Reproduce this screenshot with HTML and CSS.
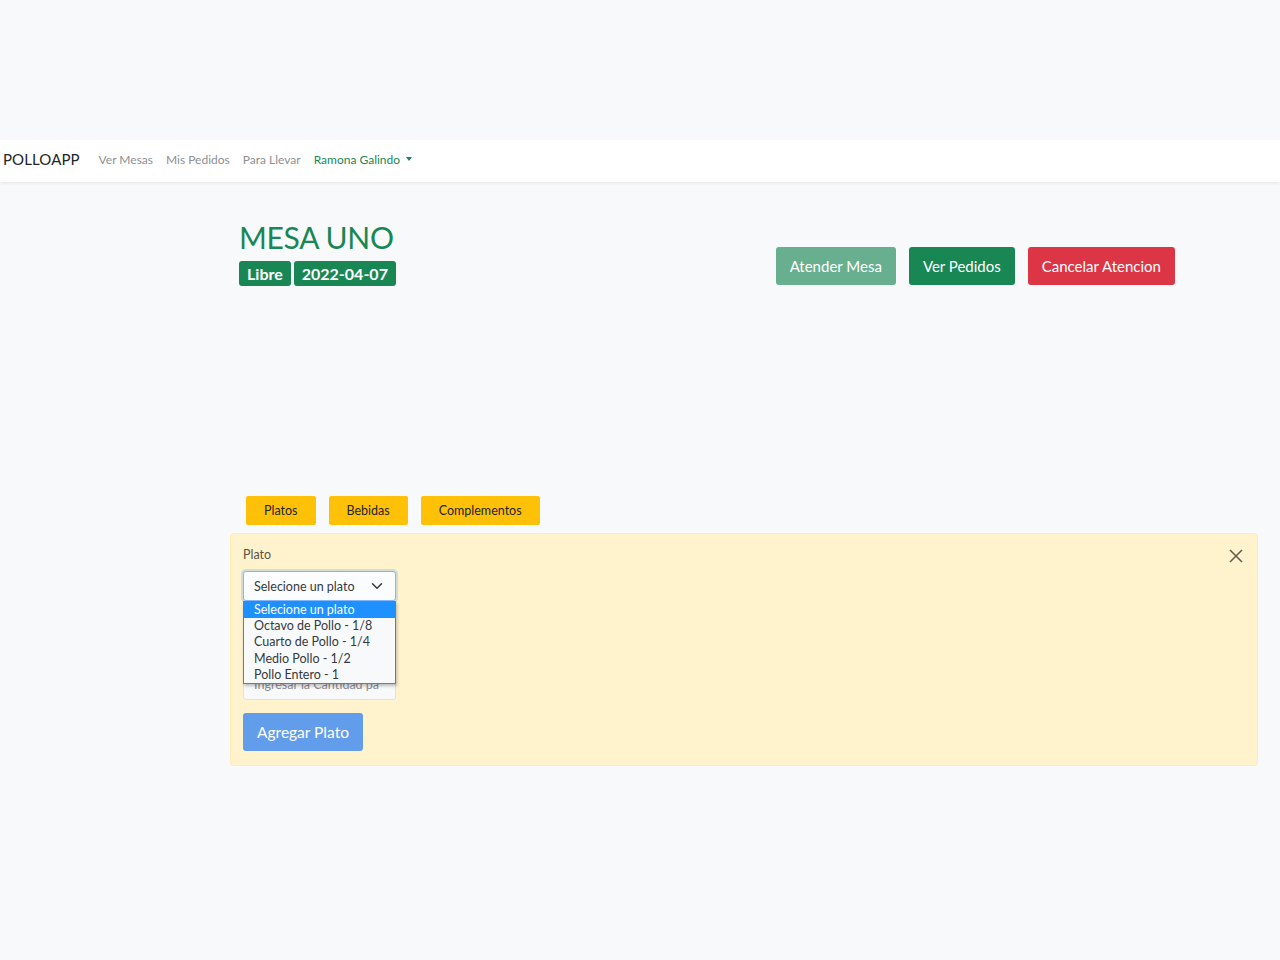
FILE: index.html
```html
<!DOCTYPE html>
<html lang="es">
<head>
<meta charset="utf-8">
<title>PolloApp - Mesa Uno</title>
<link rel="stylesheet" href="styles.css">
</head>
<body>
<div class="top-space"></div>
<nav class="navbar">
  <a class="brand">POLLOAPP</a>
  <ul class="nav-links">
    <li><a>Ver Mesas</a></li>
    <li><a>Mis Pedidos</a></li>
    <li><a>Para Llevar</a></li>
    <li><a class="user">Ramona Galindo <span class="caret"></span></a></li>
  </ul>
</nav>
<main>
  <section class="mesa-header">
    <div class="mesa-info">
      <h1 class="mesa-title">MESA UNO</h1>
      <div class="badges">
        <span class="badge">Libre</span>
        <span class="badge">2022-04-07</span>
      </div>
    </div>
    <div class="actions">
      <button class="btn btn-success disabled">Atender Mesa</button>
      <button class="btn btn-success">Ver Pedidos</button>
      <button class="btn btn-danger">Cancelar Atencion</button>
    </div>
  </section>

  <div class="tabs">
    <button class="tab">Platos</button>
    <button class="tab">Bebidas</button>
    <button class="tab">Complementos</button>
  </div>

  <section class="alert">
    <button class="close" aria-label="Cerrar">
      <svg width="14" height="14" viewBox="0 0 14 14"><path d="M1 1L13 13M13 1L1 13" stroke="#5f5a4f" stroke-width="1.5" fill="none"/></svg>
    </button>
    <label class="label">Plato</label>
    <div class="select-wrap">
      <div class="select">
        <span>Selecione un plato</span>
        <svg width="12" height="12" viewBox="0 0 16 16"><path d="M2 5l6 6 6-6" stroke="#343a40" stroke-width="2" fill="none" stroke-linecap="round" stroke-linejoin="round"/></svg>
      </div>
      <ul class="dropdown">
        <li class="active">Selecione un plato</li>
        <li>Octavo de Pollo - 1/8</li>
        <li>Cuarto de Pollo - 1/4</li>
        <li>Medio Pollo - 1/2</li>
        <li>Pollo Entero - 1</li>
      </ul>
    </div>
    <div class="input">Ingresar la Cantidad pa</div>
    <button class="btn btn-primary disabled">Agregar Plato</button>
  </section>
</main>
</body>
</html>
```
FILE: styles.css
```css
* { box-sizing: border-box; }
html, body { margin: 0; padding: 0; }
body {
  background: #f8f9fa;
  font-family: Lato, "Noto Sans", sans-serif;
  color: #212529;
  min-height: 960px;
}
.top-space { height: 140px; }
.navbar {
  height: 42px;
  background: #fff;
  display: flex;
  align-items: center;
  padding-left: 3px;
  padding-bottom: 4px;
  box-shadow: 0 2px 3px rgba(0,0,0,0.06);
}
.brand {
  font-size: 15px;
  color: #212529;
  margin-right: 19px;
  letter-spacing: 0.1px;
}
.nav-links {
  list-style: none;
  display: flex;
  margin: 0;
  padding: 0 0 3px 0;
  gap: 13px;
}
.nav-links a {
  font-size: 12px;
  color: #8c8f93;
}
.nav-links a.user { color: #198754; }
.caret {
  display: inline-block;
  width: 0; height: 0;
  border-left: 3.5px solid transparent;
  border-right: 3.5px solid transparent;
  border-top: 4px solid #198754;
  vertical-align: 3px;
  margin-left: 3px;
}
.mesa-header {
  display: flex;
  justify-content: space-between;
  align-items: flex-start;
  margin-left: 239px;
  width: 936px;
  margin-top: 37px;
}
.mesa-title {
  margin: 0 0 6px 0;
  font-size: 30px;
  font-weight: 400;
  color: #198754;
  line-height: 1.2;
  letter-spacing: -0.3px;
}
.badges { display: flex; gap: 3px; }
.badge {
  background: #198754;
  color: #fff;
  font-weight: 700;
  font-size: 16px;
  padding: 0 8px;
  height: 25px;
  line-height: 25px;
  border-radius: 3px;
}
.actions { display: flex; gap: 13px; margin-top: 28px; }
.btn {
  border: none;
  font-family: inherit;
  font-size: 15px;
  color: #fff;
  height: 38px;
  padding: 0 14px;
  border-radius: 3px;
}
.btn-success { background: #198754; }
.btn-success.disabled { background: #67af8e; }
.btn-danger { background: #dc3545; }
.btn-primary.disabled { background: #629dec; }
.tabs {
  display: flex;
  gap: 13px;
  margin-left: 246px;
  margin-top: 210px;
}
.tab {
  background: #ffc107;
  border: none;
  border-radius: 2px;
  font-family: inherit;
  font-size: 12.5px;
  color: #212529;
  height: 29px;
  padding: 0 18px;
}
.alert {
  position: relative;
  margin: 8px 22px 0 230px;
  background: #fff3cd;
  border: 1px solid #ffecb5;
  border-radius: 4px;
  padding: 12px 12px 14px;
}
.close {
  position: absolute;
  right: 14px;
  top: 15px;
  background: none;
  border: none;
  padding: 0;
}
.label {
  display: block;
  font-size: 12.5px;
  color: #5b5443;
  height: 17px;
  line-height: 17px;
}
.select-wrap { position: relative; margin-top: 8px; width: 153px; }
.select {
  height: 30px;
  background: #fbfcfd;
  border: 1px solid #86b7fe;
  box-shadow: 0 0 0 2px rgba(13,110,253,0.18);
  border-radius: 3px;
  display: flex;
  align-items: center;
  justify-content: space-between;
  padding: 0 12px 0 10px;
  font-size: 12.5px;
  color: #343a40;
}
.dropdown {
  position: absolute;
  top: 30px;
  left: 0;
  width: 153px;
  margin: 0;
  padding: 0;
  list-style: none;
  background: #f8f9fa;
  border: 1px solid #7a7a7a;
  box-shadow: 1px 2px 3px rgba(0,0,0,0.25);
  z-index: 2;
}
.dropdown li {
  font-size: 12.5px;
  height: 16.2px;
  line-height: 16px;
  padding-left: 10px;
  color: #343a40;
}
.dropdown li.active { background: #1e90ff; color: #fff; }
.input {
  margin-top: 69px;
  width: 153px;
  height: 30px;
  border: 1px solid #dee2e6;
  background: #f8f9fa;
  border-radius: 3px;
  font-size: 12.5px;
  color: #8a8d91;
  padding: 6px 10px;
  overflow: hidden;
  white-space: nowrap;
}
.alert .btn-primary { display: block; margin-top: 13px; padding: 0 14px; font-size: 15.5px; }
```
